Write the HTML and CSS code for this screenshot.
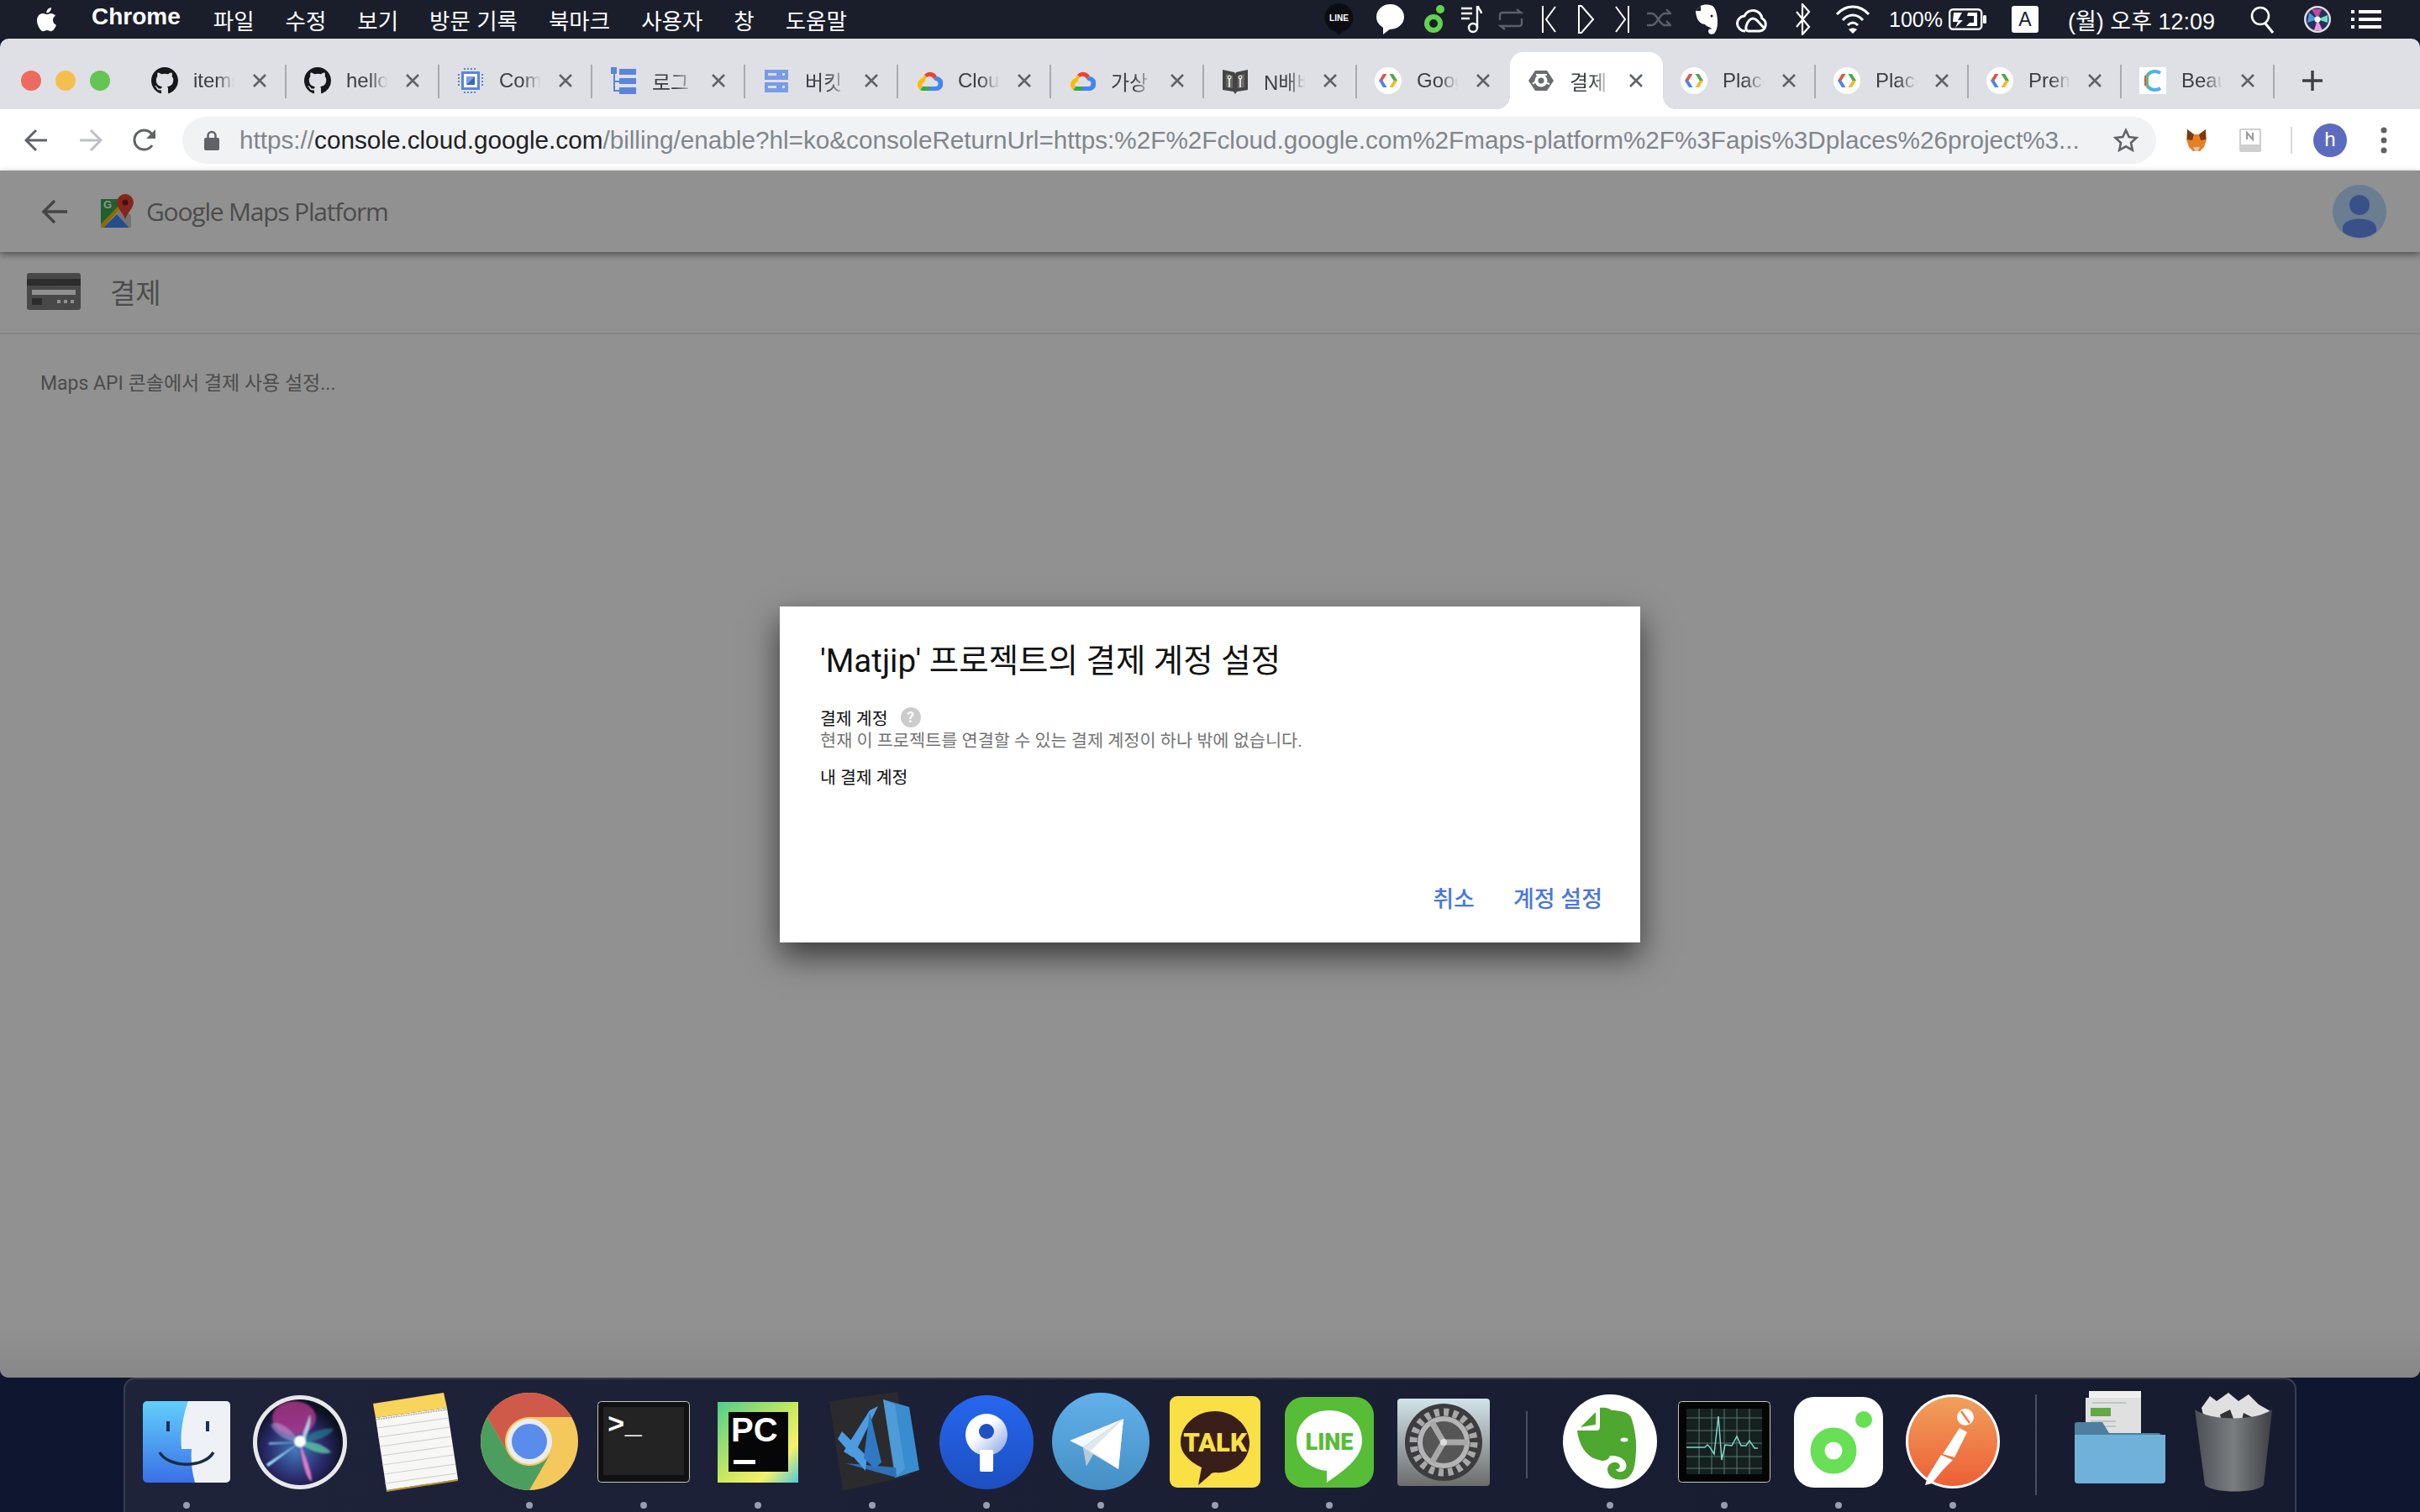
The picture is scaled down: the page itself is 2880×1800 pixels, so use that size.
FILE: index.html
```html
<!DOCTYPE html>
<html lang="ko">
  <head>
    <meta charset="UTF-8" />
    <title>결제</title>
    <link rel="stylesheet" href="styles.css">
  </head>
  <body>
    <!-- shared favicons -->
    <svg class="defs" width="0" height="0">
      <defs>
        <symbol id="fav-github" viewBox="0 0 16 16"><path fill="#17171a" d="M8 0C3.58 0 0 3.58 0 8c0 3.54 2.29 6.53 5.47 7.59.4.07.55-.17.55-.38 0-.19-.01-.82-.01-1.49-2.01.37-2.53-.49-2.69-.94-.09-.23-.48-.94-.82-1.13-.28-.15-.68-.52-.01-.53.63-.01 1.08.58 1.23.82.72 1.21 1.87.87 2.33.66.07-.52.28-.87.51-1.07-1.78-.2-3.64-.89-3.64-3.95 0-.87.31-1.59.82-2.15-.08-.2-.36-1.02.08-2.12 0 0 .67-.21 2.2.82.64-.18 1.32-.27 2-.27.68 0 1.36.09 2 .27 1.53-1.04 2.2-.82 2.2-.82.44 1.1.16 1.92.08 2.12.51.56.82 1.27.82 2.15 0 3.07-1.87 3.75-3.65 3.95.29.25.54.73.54 1.48 0 1.07-.01 1.93-.01 2.2 0 .21.15.46.55.38A8.013 8.013 0 0016 8c0-4.42-3.58-8-8-8z"/></symbol>
        <symbol id="fav-chip" viewBox="0 0 32 32"><path fill="none" stroke="#5b84dc" stroke-width="2" stroke-dasharray="2 2" d="M2 8v16M30 8v16M8 2h16M8 30h16"/><rect x="5" y="5" width="22" height="22" fill="#5b84dc"/><rect x="8" y="8" width="16" height="16" fill="#fff"/><path fill="#7ea0e6" d="M11 11h10v10H11z"/><path fill="#3c66c4" d="M21 11v10H11z"/></symbol>
        <symbol id="fav-log" viewBox="0 0 32 32"><path fill="#5b84dc" d="M1 0h7v8H1zM11 2h20v7H11zM11 13h20v7H11zM11 24h20v8H11z"/><path fill="none" stroke="#5b84dc" stroke-width="2" d="M5 8v20h6M5 17h6"/></symbol>
        <symbol id="fav-bucket" viewBox="0 0 32 32"><path fill="#7a9be4" d="M2 3h28v12H2zM2 18h28v12H2z"/><path fill="#d5e0f8" d="M6 7h10v3H6zM6 22h10v3H6zM23 7h3v3h-3zM23 22h3v3h-3z"/></symbol>
        <symbol id="fav-cloud" viewBox="0 0 32 32"><path fill="#ea4335" d="M10 9a9 9 0 0 1 15 2l-4 3a5 5 0 0 0-8-2z"/><path fill="#4285f4" d="M25 11a8 8 0 0 1-2 17h-7v-5h7a3 3 0 0 0 0-7l-2-2z"/><path fill="#34a853" d="M8 23h8v5H8a7 7 0 0 1-3-1z"/><path fill="#fbbc05" d="M10 9l3 3a5 5 0 0 0-2 4l-1 2a3 3 0 0 0-2 5l-3 4a8 8 0 0 1 3-14z"/></symbol>
        <symbol id="fav-book" viewBox="0 0 32 32"><path fill="#444" d="M1 3l14 3 1 2 1-2 14-3v24l-13 2-2 3-2-3-13-2z"/><path fill="#fff" d="M5 8l8 2v15l-8-1zM27 8l-8 2v15l8-1z" opacity=".2"/><path fill="none" stroke="#fff" stroke-width="1.5" d="M9 13v11M22 13v11"/><circle cx="9" cy="12" r="2" fill="none" stroke="#fff"/><circle cx="22" cy="12" r="2" fill="none" stroke="#fff"/></symbol>
        <symbol id="fav-dev" viewBox="0 0 32 32"><circle cx="16" cy="16" r="16" fill="#fff"/><path fill="#db5a45" d="M10 8h4.500l-5 8H5z"/><path fill="#4285f4" d="M5 16h4.500l5 8H10z"/><path fill="#4ea84f" d="M17.500 8H22l5 8h-4.500z"/><path fill="#f2b92c" d="M27 16h-4.500l-5 8H22z"/></symbol>
        <symbol id="fav-hex" viewBox="0 0 32 32"><path fill="#6a6d70" d="M9 4h14l8 12-8 12H9L1 16z"/><path stroke="#fff" stroke-width="2" d="M10 9h13M26 20l-6-2M6 20l6-5"/><circle cx="16" cy="16" r="7.500" fill="#fff"/><circle cx="16" cy="16" r="3.500" fill="#6a6d70"/></symbol>
        <symbol id="fav-beau" viewBox="0 0 32 32"><path fill="#fff" d="M0 0h32v32H0z"/><path fill="none" stroke="#4fb3e8" stroke-width="4" d="M25 7a11 11 0 1 0 0 18"/><path fill="none" stroke="#e2574c" stroke-width="2" d="M7 10v12"/><path fill="none" stroke="#6cc04a" stroke-width="2" d="M10 7v18"/></symbol>
        <symbol id="tab-x" viewBox="0 0 18 18"><path fill="none" stroke="#5f6368" stroke-width="2.600" d="M2 2l14 14M16 2L2 16"/></symbol>
      </defs>
    </svg>

    <header class="menubar">
      <svg class="apple" width="26" height="32" viewBox="0 0 26 32"><path fill="#fff" d="M21 17c0-3.500 2.800-5 3-5.200-1.700-2.400-4.200-2.700-5.100-2.800-2.100-.2-4.200 1.300-5.300 1.300-1.100 0-2.800-1.300-4.600-1.200C6.600 9.100 4.400 10.400 3.200 12.500.7 16.800 2.600 23.200 5 26.700c1.200 1.700 2.600 3.600 4.500 3.600 1.800-.1 2.500-1.200 4.600-1.200s2.800 1.200 4.600 1.100c1.900 0 3.100-1.700 4.300-3.400 1.400-2 1.900-3.900 2-4-.1 0-3.900-1.500-4-5.800zM17.500 6.600c1-1.200 1.600-2.800 1.500-4.500-1.400.1-3.200 1-4.200 2.200-.9 1-1.700 2.700-1.500 4.300 1.600.1 3.200-.8 4.200-2z"/></svg>
      <nav class="menus">
        <span class="menu-app">Chrome</span>
        <span>파일</span><span>수정</span><span>보기</span><span>방문 기록</span><span>북마크</span><span>사용자</span><span>창</span><span>도움말</span>
      </nav>
      <div class="status">
        <svg class="st-line" width="35" height="38" viewBox="0 0 35 38"><circle cx="17.500" cy="17" r="17" fill="#0c0d12"/><path fill="#0c0d12" d="M12 32h11l-5.500 6z"/><text x="17.500" y="21" class="st-line-text">LINE</text></svg>
        <svg class="st-bubble" width="33" height="36" viewBox="0 0 33 36"><ellipse cx="16.500" cy="15" rx="16.500" ry="15" fill="#fff"/><path fill="#fff" d="M8 26l0 10 9-7z"/></svg>
        <svg class="st-green" width="25" height="34" viewBox="0 0 25 34"><circle cx="19" cy="5" r="5" fill="#63d34f"/><circle cx="11" cy="22" r="8" fill="none" stroke="#63d34f" stroke-width="6"/></svg>
        <svg class="st-music" width="26" height="34" viewBox="0 0 26 34"><path fill="none" stroke="#fff" stroke-width="2.400" d="M1 4h13M1 10h13M1 16h10M21 1c0 4 4 5 4 9M20 1v26"/><circle cx="15" cy="27" r="5" fill="none" stroke="#fff" stroke-width="2.400"/></svg>
        <svg class="st-repeat" width="30" height="26" viewBox="0 0 30 26"><path fill="none" stroke="#5c5f68" stroke-width="2.400" d="M2 14V8a3 3 0 0 1 3-3h22l-5-4M28 12v6a3 3 0 0 1-3 3H3l5 4"/></svg>
        <svg class="st-prev" width="18" height="34" viewBox="0 0 18 34"><path fill="none" stroke="#fff" stroke-width="2" d="M2 1v32M17 2L6 17l11 15"/></svg>
        <svg class="st-play" width="21" height="36" viewBox="0 0 21 36"><path fill="none" stroke="#fff" stroke-width="2" d="M2 2h3l14 16L5 34H2z"/></svg>
        <svg class="st-next" width="18" height="34" viewBox="0 0 18 34"><path fill="none" stroke="#fff" stroke-width="2" d="M16 1v32M1 2l11 15L1 32"/></svg>
        <svg class="st-shuffle" width="29" height="26" viewBox="0 0 29 26"><path fill="none" stroke="#5c5f68" stroke-width="2.400" d="M0 6h6c6 0 9 14 15 14h7l-5-5M0 20h6c6 0 9-14 15-14h7l-5-5"/></svg>
        <svg class="st-evernote" width="27" height="36" viewBox="0 0 27 36"><path fill="#fff" d="M7 2c3-2 10-2 14 0 4 3 6 11 6 20 0 6-2 11-4 13-4 2-7 0-7-3s3-3 4-2c-1-3-6-3-8-6-3 0-9-3-10-10-1-3-1-5-1-6l6-6z"/><path fill="#1a1e2b" d="M7 2v6H1z"/><circle cx="20" cy="14" r="1.500" fill="#1a1e2b"/></svg>
        <svg class="st-cc" width="37" height="34" viewBox="0 0 37 34"><path fill="none" stroke="#fff" stroke-width="3" d="M11 31a9 9 0 0 1-1-18 11 11 0 0 1 21 3 8 8 0 0 1-3 15H15C8 31 14 16 20 16s9 9 14 11"/></svg>
        <svg class="st-bt" width="19" height="38" viewBox="0 0 19 38"><path fill="none" stroke="#fff" stroke-width="2.200" d="M2 10l15 18-8 9V1l8 9L2 28"/></svg>
        <svg class="st-wifi" width="42" height="36" viewBox="0 0 42 36"><path fill="none" stroke="#fff" stroke-width="3" d="M2 12c11-12 27-12 38 0M9 19c7-8 17-8 24 0M15 25c4-4 8-4 12 0"/><path fill="#fff" d="M21 35l-5-5c3-2 7-2 10 0z"/></svg>
        <span class="st-text">100%</span>
        <svg class="st-battery" width="45" height="26" viewBox="0 0 45 26"><rect x="1.200" y="1.200" width="38" height="23.600" rx="4" fill="none" stroke="#fff" stroke-width="2.400"/><rect x="41" y="8" width="4" height="10" rx="1.500" fill="#fff"/><path fill="#fff" d="M6 5h10l-5 9h6L8 23l3-7H5zM23 5h11v16H21l4-4h5V9h-8z"/></svg>
        <span class="st-input">A</span>
        <span class="st-clock">(월) 오후 12:09</span>
        <svg class="st-search" width="28" height="34" viewBox="0 0 28 34"><circle cx="12" cy="13" r="10" fill="none" stroke="#fff" stroke-width="2.600"/><path stroke="#fff" stroke-width="3" d="M18 22l9 11"/></svg>
        <svg class="st-siri" width="32" height="32" viewBox="0 0 32 32"><circle cx="16" cy="16" r="16" fill="#dfe0e6"/><circle cx="16" cy="16" r="13.500" fill="#2a2f5c"/><path fill="#c04aa0" d="M16 16L9 4l12 0z"/><path fill="#4a9ae0" d="M16 16L4 20l2-12z"/><path fill="#e8a0d8" d="M16 16l6 13-10 0z"/><path fill="#6fe0c8" d="M16 16l12-5 0 9z"/><circle cx="16" cy="16" r="3.500" fill="#fff"/></svg>
        <svg class="st-list" width="36" height="22" viewBox="0 0 36 22"><path fill="#fff" d="M0 0h4v4H0zM9 0h27v4H9zM0 9h4v4H0zM9 9h27v4H9zM0 18h4v4H0zM9 18h27v4H9z"/></svg>
      </div>
    </header>

    <div class="window">
      <div class="tabstrip">
        <div class="lights"><i class="light red"></i><i class="light yellow"></i><i class="light green"></i></div>
        <div class="tab"><svg class="fav"><use href="#fav-github"/></svg><span class="tab-label">items</span><svg class="tab-close"><use href="#tab-x"/></svg></div>
        <div class="tab"><svg class="fav"><use href="#fav-github"/></svg><span class="tab-label">hello</span><svg class="tab-close"><use href="#tab-x"/></svg></div>
        <div class="tab"><svg class="fav"><use href="#fav-chip"/></svg><span class="tab-label">Compute</span><svg class="tab-close"><use href="#tab-x"/></svg></div>
        <div class="tab"><svg class="fav"><use href="#fav-log"/></svg><span class="tab-label">로그 뷰어</span><svg class="tab-close"><use href="#tab-x"/></svg></div>
        <div class="tab"><svg class="fav"><use href="#fav-bucket"/></svg><span class="tab-label">버킷 세부</span><svg class="tab-close"><use href="#tab-x"/></svg></div>
        <div class="tab"><svg class="fav"><use href="#fav-cloud"/></svg><span class="tab-label">Cloud</span><svg class="tab-close"><use href="#tab-x"/></svg></div>
        <div class="tab"><svg class="fav"><use href="#fav-cloud"/></svg><span class="tab-label">가상 머신</span><svg class="tab-close"><use href="#tab-x"/></svg></div>
        <div class="tab"><svg class="fav"><use href="#fav-book"/></svg><span class="tab-label">N배배배</span><svg class="tab-close"><use href="#tab-x"/></svg></div>
        <div class="tab no-sep"><svg class="fav"><use href="#fav-dev"/></svg><span class="tab-label">Google</span><svg class="tab-close"><use href="#tab-x"/></svg></div>
        <div class="tab tab-active"><svg class="fav"><use href="#fav-hex"/></svg><span class="tab-label">결제 서비스</span><svg class="tab-close"><use href="#tab-x"/></svg></div>
        <div class="tab"><svg class="fav"><use href="#fav-dev"/></svg><span class="tab-label">Places</span><svg class="tab-close"><use href="#tab-x"/></svg></div>
        <div class="tab"><svg class="fav"><use href="#fav-dev"/></svg><span class="tab-label">Places</span><svg class="tab-close"><use href="#tab-x"/></svg></div>
        <div class="tab"><svg class="fav"><use href="#fav-dev"/></svg><span class="tab-label">Premium</span><svg class="tab-close"><use href="#tab-x"/></svg></div>
        <div class="tab"><svg class="fav"><use href="#fav-beau"/></svg><span class="tab-label">Beautiful</span><svg class="tab-close"><use href="#tab-x"/></svg></div>
        <svg class="new-tab" width="26" height="26" viewBox="0 0 26 26"><path stroke="#3c4043" stroke-width="3.400" d="M13 1v24M1 13h24"/></svg>
      </div>

      <div class="toolbar">
        <svg class="nav-back" width="28" height="28" viewBox="0 0 28 28"><path fill="none" stroke="#5f6368" stroke-width="3" d="M27 14H3M14 2L2 14l12 12"/></svg>
        <svg class="nav-forward" width="28" height="28" viewBox="0 0 28 28"><path fill="none" stroke="#bdc1c6" stroke-width="3" d="M1 14h24M14 2l12 12-12 12"/></svg>
        <svg class="nav-reload" width="28" height="28" viewBox="0 0 28 28"><path fill="none" stroke="#5f6368" stroke-width="3" d="M23 20a11.500 11.500 0 1 1 1-11"/><path fill="#5f6368" d="M27 1v11H16z"/></svg>
        <div class="omnibox">
          <svg class="lock" width="18" height="24" viewBox="0 0 18 24"><path fill="none" stroke="#5f6368" stroke-width="2.500" d="M4.500 10V6.500a4.500 4.500 0 0 1 9 0V10"/><rect y="9" width="18" height="15" rx="2" fill="#5f6368"/></svg>
          <span class="url"><span class="url-dim">https://</span><span class="url-host">console.cloud.google.com</span><span class="url-dim">/billing/enable?hl=ko&amp;consoleReturnUrl=https:%2F%2Fcloud.google.com%2Fmaps-platform%2F%3Fapis%3Dplaces%26project%3...</span></span>
          <svg class="star" width="30" height="30" viewBox="0 0 30 30"><path fill="none" stroke="#5f6368" stroke-width="2.600" d="M15 3l3.700 8 8.800 1-6.500 6 1.800 8.700L15 22.300l-7.800 4.400L9 18l-6.500-6 8.800-1z"/></svg>
        </div>
        <svg class="ext-fox" width="28" height="28" viewBox="0 0 28 28"><path fill="#e87f24" d="M3 1l8 6h6l8-6 1 12-3 9-5 5h-8l-5-5-3-9z"/><path fill="#763d16" d="M3 1l8 6-2 7-6-1zM25 1l-8 6 2 7 6-1z"/><path fill="#d7c1b3" d="M10 22h8l-2 5h-4z"/></svg>
        <svg class="ext-note" width="26" height="28" viewBox="0 0 26 28"><rect x="1" y="1" width="24" height="26" rx="1" fill="none" stroke="#cfcfcf" stroke-width="2"/><rect x="1" y="19" width="24" height="8" fill="#cfcfcf"/><path stroke="#9a9a9a" stroke-width="2" fill="none" d="M9 13V5l7 8V5"/></svg>
        <span class="tool-sep"></span>
        <span class="profile">h</span>
        <svg class="kebab" width="8" height="32" viewBox="0 0 8 32"><circle cx="4" cy="4" r="3.500" fill="#5f6368"/><circle cx="4" cy="16" r="3.500" fill="#5f6368"/><circle cx="4" cy="28" r="3.500" fill="#5f6368"/></svg>
      </div>

      <main class="page">
        <div class="app-header">
          <svg class="app-back" width="32" height="32" viewBox="0 0 32 32"><path fill="none" stroke="#777" stroke-width="3.400" d="M31 16H3M16 3L3 16l13 13"/></svg>
          <svg class="maps-logo" width="40" height="42" viewBox="0 0 40 42"><path fill="#34a853" d="M0 6h30v6L0 36z"/><path fill="#4285f4" d="M3 40l16-16 15 16z"/><path fill="#fbbc05" d="M0 36L21 14l3 3L3 40H0z"/><path fill="#ccc" d="M24 17l12 8v15h-2L19 24z"/><path fill="#ea4335" d="M29 0a10 10 0 0 1 10 10c0 6-7 12-10 20-3-8-10-14-10-20A10 10 0 0 1 29 0z"/><circle cx="29" cy="10" r="3.500" fill="#7a1c14"/><text x="3" y="17" class="maps-g">G</text></svg>
          <span class="brand">Google Maps Platform</span>
          <svg class="avatar" width="64" height="64" viewBox="0 0 64 64"><circle cx="32" cy="32" r="32" fill="#badbff"/><circle cx="32" cy="24" r="12" fill="#668cef"/><path fill="#668cef" d="M12 52c0-8 10-11.500 20-11.500S52 44 52 52v4a32 32 0 0 1-40 0z"/></svg>
        </div>
        <div class="billing-bar">
          <svg class="card-icon" width="64" height="44" viewBox="0 0 64 44"><rect width="64" height="44" rx="3" fill="#7f7f7f"/><rect y="7" width="64" height="8" fill="#4e4e4e"/><rect x="6" y="20" width="52" height="6" fill="#fff"/><rect x="6" y="30" width="12" height="8" fill="#4e4e4e"/><path fill="#fff" d="M36 32h4v4h-4zM44 32h4v4h-4zM52 32h4v4h-4z"/></svg>
          <h1 class="billing-title">결제</h1>
        </div>
        <p class="loading">Maps API 콘솔에서 결제 사용 설정...</p>
        <div class="scrim">
          <section class="dialog">
            <h2 class="dialog-title">'Matjip' 프로젝트의 결제 계정 설정</h2>
            <div class="field-label">결제 계정 <span class="help">?</span></div>
            <p class="field-desc">현재 이 프로젝트를 연결할 수 있는 결제 계정이 하나 밖에 없습니다.</p>
            <div class="field-label field-mine">내 결제 계정</div>
            <div class="dialog-actions">
              <span class="dialog-btn">취소</span>
              <span class="dialog-btn">계정 설정</span>
            </div>
          </section>
        </div>
      </main>
    </div>

    <footer class="dock">
      <!-- finder -->
      <div class="app on"><svg viewBox="0 0 120 120"><defs><linearGradient id="fa" x1="0" y1="0" x2="0" y2="1"><stop offset="0" stop-color="#62cffb"/><stop offset="1" stop-color="#3a70e8"/></linearGradient></defs><rect x="8" y="12" width="104" height="97" rx="5" fill="url(#fa)"/><path fill="#eef2f7" d="M62 12h45a5 5 0 0 1 5 5v87a5 5 0 0 1-5 5H70c-4-14-5-29-4-40H54c-2-19 2-41 8-57z"/><path fill="#1c2f55" d="M36 36h4v12h-4zM83 36h4v12h-4z"/><path fill="none" stroke="#1d2c44" stroke-width="3.500" d="M28 73c10 18 52 20 64 0"/></svg><i></i></div>
      <!-- siri -->
      <div class="app"><svg viewBox="0 0 120 120"><defs><radialGradient id="si" cx=".45" cy=".6" r=".55"><stop offset="0" stop-color="#3f78b8"/><stop offset=".6" stop-color="#2b2a6c"/><stop offset="1" stop-color="#0d1220"/></radialGradient><filter id="soft"><feGaussianBlur stdDeviation="1.200"/></filter><clipPath id="sic"><circle cx="59" cy="61" r="51"/></clipPath></defs><circle cx="59" cy="61" r="56" fill="#e8e8ea"/><circle cx="59" cy="61" r="51" fill="url(#si)"/><g clip-path="url(#sic)" filter="url(#soft)"><ellipse cx="52" cy="32" rx="26" ry="20" fill="#b03a8e" opacity=".8"/><path fill="#2a8a9a" d="M59 61c10-10 25-18 40-16-5 10-25 16-40 16z" opacity=".6"/><path fill="#c9b8e8" d="M59 61C45 40 30 35 24 40c6 14 22 20 35 21z" opacity=".45"/><path fill="#5fd0a8" d="M59 61c14-2 28 2 37 12-10 4-28-2-37-12z" opacity=".75"/><path fill="#e07ac8" d="M59 61c6 16 14 34 14 46-6 0-13-28-14-46z"/><path fill="#a8f6ff" d="M59 61L19 87l2 3z"/><path fill="#c4ecff" d="M59 61l12-33c2 12-4 26-8 33z" opacity=".8"/><path fill="#8fe8ff" d="M59 61H22v3z" opacity=".7"/></g><circle cx="59" cy="60" r="7" fill="#fff" filter="url(#soft)"/></svg></div>
      <!-- notes -->
      <div class="app"><svg viewBox="0 0 120 120"><path fill="#b9932b" d="M26 118l85-13v2l-85 13z"/><path fill="#f7f7f5" d="M13 32l85-12 13 85-85 13z"/><path fill="#f8d45c" d="M10 15L94 2l4 18-85 12z"/><path stroke="#d0d0d0" stroke-width="1.200" fill="none" d="M15 44l85-12M16 55l85-12M18 66l85-12M20 77l85-12M21 88l85-12M23 99l85-12M24 110l85-12"/><path stroke="#aaa" stroke-width="1.500" stroke-dasharray="2 1" d="M13 34l85-12"/></svg></div>
      <!-- chrome -->
      <div class="app on"><svg viewBox="0 0 120 120"><circle cx="60" cy="60" r="58" fill="#f5c85c"/><path fill="#cf5a4a" d="M9.800 31A58 58 0 0 1 110.200 31H60A29 29 0 0 0 34.900 74.500z"/><path fill="#4c9e5f" d="M9.800 31A58 58 0 0 0 60 118L85.100 74.500A29 29 0 0 1 34.900 74.500z"/><circle cx="60" cy="60" r="27" fill="#e9edf2"/><circle cx="60" cy="60" r="21" fill="#5a8cec"/></svg><i></i></div>
      <!-- terminal -->
      <div class="app on"><svg viewBox="0 0 120 120"><rect x="5.500" y="12.500" width="109" height="96" rx="4" fill="#111" stroke="#c4c4c4"/><rect x="12" y="19" width="96" height="81" fill="#232323"/><text x="17" y="50" class="term-text">&gt;_</text></svg><i></i></div>
      <!-- pycharm -->
      <div class="app on"><svg viewBox="0 0 120 120"><defs><linearGradient id="pc" x1="0" y1="0" x2="1" y2="1"><stop offset="0" stop-color="#4fcf8a"/><stop offset=".5" stop-color="#c8e860"/><stop offset=".75" stop-color="#f5f26a"/><stop offset="1" stop-color="#53c8de"/></linearGradient></defs><rect x="12" y="13" width="96" height="96" fill="url(#pc)"/><rect x="25" y="25" width="71" height="71" fill="#060606"/><text x="28" y="60" class="pc-text">PC</text><rect x="31" y="82" width="26" height="5" fill="#fff"/></svg><i></i></div>
      <!-- vs code -->
      <div class="app on"><svg viewBox="0 0 120 120"><path fill="#2b2b2d" d="M9 12L90 1l14 100-79 18z"/><path fill="#3a8cd0" d="M73 10l31 9 12 75-28 9-2-12z"/><path fill="#5aa5e0" d="M73 10l14 6 12 76-12 12-14-94z" opacity=".6"/><path fill="#3070b8" d="M28 86l60 5 1 12z"/><path fill="#4d9be0" d="M24 48l-5 9 33 38 2-17zM67 18l-10 5-31 49 11 7z"/><path fill="#2f79c4" d="M57 25l14 60-8 7-13-12z"/></svg><i></i></div>
      <!-- sourcetree -->
      <div class="app on"><svg viewBox="0 0 120 120"><defs><linearGradient id="st" x1="0" y1="0" x2="0" y2="1"><stop offset="0" stop-color="#2567ef"/><stop offset="1" stop-color="#1d4fc0"/></linearGradient><linearGradient id="stk" x1="0" y1="0" x2="1" y2="1"><stop offset=".4" stop-color="#fff"/><stop offset="1" stop-color="#7f9ce0"/></linearGradient></defs><circle cx="60" cy="61" r="56" fill="url(#st)"/><circle cx="60" cy="52" r="25" fill="url(#stk)"/><circle cx="60" cy="48" r="9" fill="#1f50c4"/><rect x="52" y="70" width="16" height="26" rx="2" fill="#fff"/></svg><i></i></div>
      <!-- telegram -->
      <div class="app on"><svg viewBox="0 0 120 120"><defs><linearGradient id="tg" x1="0" y1="0" x2="0" y2="1"><stop offset="0" stop-color="#62b0ea"/><stop offset="1" stop-color="#458fc4"/></linearGradient></defs><circle cx="60" cy="60" r="58" fill="url(#tg)"/><path fill="#f5f8fb" d="M87 33L23 59l16 8z"/><path fill="#dfe7ef" d="M87 33L39 67l4 22 8-14 30 18z"/><path fill="#fff" d="M87 33L48 71l33 22z"/><path fill="#b9c9d8" d="M39 67l4 22 8-14z"/></svg><i></i></div>
      <!-- kakaotalk -->
      <div class="app on"><svg viewBox="0 0 120 120"><rect x="6" y="6" width="108" height="109" rx="9" fill="#f8e045"/><path fill="#3a1e1a" d="M60 24c22 0 41 17 41 38 0 20-18 37-41 35-3 0-5 1-6 3l-14 12 4-21C28 83 19 73 19 61c0-21 19-37 41-37z"/><text x="60" y="72" class="talk-text">TALK</text></svg><i></i></div>
      <!-- line -->
      <div class="app on"><svg viewBox="0 0 120 120"><rect x="7" y="7" width="106" height="108" rx="22" fill="#57bc36"/><path fill="#fff" d="M60 23c23 0 39 15 39 36 0 22-24 37-42 50v-14c-20-2-36-16-36-36 0-21 16-36 39-36z"/><text x="60" y="70" class="line-text">LINE</text></svg><i></i></div>
      <!-- system preferences -->
      <div class="app"><svg viewBox="0 0 120 120"><defs><linearGradient id="pr" x1="0" y1="0" x2="0" y2="1"><stop offset="0" stop-color="#d2e4ea"/><stop offset="1" stop-color="#6c6c6c"/></linearGradient></defs><rect x="5" y="9" width="110" height="104" rx="4" fill="url(#pr)"/><circle cx="60" cy="61" r="46" fill="#3c3c3e"/><circle cx="60" cy="61" r="36" fill="none" stroke="#a8a8a8" stroke-width="9" stroke-dasharray="6 5.300"/><circle cx="60" cy="61" r="28" fill="#565656" stroke="#b5b5b5" stroke-width="6"/><path stroke="#a8a8a8" stroke-width="7" fill="none" d="M60 61L46 37M60 61h29M60 61L46 85"/><circle cx="60" cy="61" r="4" fill="#ddd"/></svg></div>
      <div class="dock-sep short"></div>
      <!-- evernote -->
      <div class="app on"><svg viewBox="0 0 120 120"><circle cx="60" cy="60" r="56" fill="#fff"/><path fill="#4ea72f" d="M48 20c6-1 12 1 14 3 10 0 20 2 23 8 4 11 7 27 6 41-1 16-2 26-11 32-10 4-22 0-23-10 0-8 9-12 14-7 2 3 0 7-4 6 1 4 9 5 12-1 3-9-7-16-19-15-2 6-8 7-13 5-11-2-23-12-26-35h23c3 0 4-2 4-5zM25 43l18-18v15z"/><ellipse cx="77" cy="58" rx="4.500" ry="2.500" fill="#fff"/></svg><i></i></div>
      <!-- activity monitor -->
      <div class="app on"><svg viewBox="0 0 120 120"><rect x="5.500" y="12.500" width="109" height="96" rx="4" fill="#050505" stroke="#c4c4c4"/><rect x="15" y="21" width="90" height="78" fill="#15211f"/><path stroke="#5d7672" stroke-width="1" fill="none" d="M15 32h90M15 47h90M15 62h90M15 78h90M15 92h90M30 21v78M45 21v78M60 21v78M75 21v78M90 21v78"/><path stroke="#7fd8c8" stroke-width="1.500" fill="none" d="M15 67h22l3-3 3 3 5 8 5-45 4 52 4-18 8 1 6-11 5 11h6l4-6 6 9h4"/></svg><i></i></div>
      <!-- whatap -->
      <div class="app on"><svg viewBox="0 0 120 120"><rect x="7" y="7" width="106" height="108" rx="24" fill="#fff"/><circle cx="90" cy="34" r="10" fill="#67e055"/><circle cx="54" cy="71" r="19" fill="none" stroke="#67e055" stroke-width="17"/></svg><i></i></div>
      <!-- postman -->
      <div class="app on"><svg viewBox="0 0 120 120"><defs><linearGradient id="pm" x1="0" y1="0" x2="0" y2="1"><stop offset="0" stop-color="#f1a05c"/><stop offset="1" stop-color="#ed5f36"/></linearGradient></defs><circle cx="60" cy="60" r="56" fill="#fff"/><circle cx="60" cy="60" r="53" fill="url(#pm)"/><circle cx="75" cy="31" r="10" fill="#fff"/><path stroke="#ef7d48" stroke-width="2.500" d="M70 24l10 14"/><path fill="#fff" d="M68 44l9 5-15 30-14-4zM46 76l14 6-11 11-14 17-8 2 3-10z"/></svg><i></i></div>
      <div class="dock-sep tall"></div>
      <!-- downloads -->
      <div class="app"><svg viewBox="0 0 120 120"><path fill="#f0f0f0" d="M24 0h62v50H24z"/><path fill="#e0e0e0" d="M20 8h66v42H20z"/><path fill="#62a845" d="M26 20h24v10H26z"/><path stroke="#9aa" d="M28 14h40M26 36h30M26 42h30"/><path fill="#4f7f9e" d="M7 40a3 3 0 0 1 3-3h30l8 13h58a4 4 0 0 1 4 4v30H7z"/><path fill="#6fb1d8" d="M7 52h108v54a4 4 0 0 1-4 4H11a4 4 0 0 1-4-4z"/></svg></div>
      <!-- trash -->
      <div class="app"><svg viewBox="0 0 120 120"><defs><linearGradient id="tr" x1="0" y1="0" x2="1" y2="0"><stop offset="0" stop-color="#4c4f54"/><stop offset=".5" stop-color="#7a7d80"/><stop offset="1" stop-color="#3e4044"/></linearGradient></defs><path fill="#e0e0e0" d="M22 20l10-14 8 6 14-10 12 10 12-8 12 12 14 8-8 22H28z"/><path fill="#333" d="M44 28l12-6 6 16-14 6zM72 26l12 6-4 14-12-4z"/><path fill="url(#tr)" d="M14 22c20 14 72 14 92 0l-10 90c-8 10-60 10-70 0z"/></svg></div>
    </footer>
  </body>
</html>
```

FILE: styles.css
```css
* {
  box-sizing: border-box;
}
body {
  margin: 0;
  width: 2880px;
  height: 1800px;
  overflow: hidden;
  display: flex;
  flex-direction: column;
  background-color: #0e1630;
  font-family: "Liberation Sans", "Noto Sans CJK KR", sans-serif;
}
.defs {
  position: absolute;
}

/* menu bar */
.menubar {
  height: 46px;
  flex: none;
  display: flex;
  align-items: center;
  padding-left: 42px;
  background-color: #1a1e2b;
  color: #fff;
  font-size: 26.5px;
}
.menus {
  display: flex;
  gap: 37px;
  margin-left: 41px;
}
.menu-app {
  font-weight: bold;
  font-size: 28px;
  margin-right: 2px;
}
.status {
  margin-left: auto;
  display: flex;
  align-items: center;
}
.status svg {
  flex: none;
}
.st-line { margin-right: 27px; }
.st-bubble { margin-right: 24px; }
.st-green { margin-right: 18px; }
.st-music { margin-right: 19px; }
.st-repeat { margin-right: 21px; }
.st-prev { margin-right: 25px; }
.st-play { margin-right: 24px; }
.st-next { margin-right: 20px; }
.st-shuffle { margin-right: 28px; }
.st-evernote { margin-right: 22px; }
.st-cc { margin-right: 33px; }
.st-bt { margin-right: 29px; }
.st-wifi { margin-right: 22px; }
.st-battery { margin-right: 30px; margin-left: 10px; }
.st-search { margin-right: 36px; }
.st-siri { margin-right: 24px; }
.st-list { margin-right: 46px; }
.st-line-text {
  font-size: 10px;
  font-weight: bold;
  fill: #fff;
  text-anchor: middle;
}
.st-text {
  width: 61px;
  font-size: 25px;
  white-space: nowrap;
}
.st-input {
  width: 32px;
  height: 32px;
  border-radius: 3px;
  margin-right: 35px;
  background-color: #fff;
  color: #1a1e2b;
  font-size: 23px;
  line-height: 32px;
  text-align: center;
}
.st-clock {
  width: 176px;
  margin-right: 41px;
  font-size: 27px;
  white-space: nowrap;
}

/* browser window */
.window {
  height: 1594px;
  flex: none;
  display: flex;
  flex-direction: column;
  border-radius: 10px;
  overflow: hidden;
}
.tabstrip {
  height: 84px;
  flex: none;
  display: flex;
  align-items: flex-end;
  background-color: #dfe0e5;
}
.lights {
  width: 159px;
  height: 68px;
  flex: none;
  display: flex;
  align-items: center;
  gap: 17px;
  padding-left: 25px;
}
.light {
  width: 24px;
  height: 24px;
  border-radius: 50%;
}
.red { background-color: #ed6a5e; }
.yellow { background-color: #f5bf4f; }
.green { background-color: #62c554; }
.tab {
  width: 182px;
  height: 68px;
  flex: none;
  position: relative;
  display: flex;
  align-items: center;
  padding-left: 21px;
  color: #3c4043;
  font-size: 24px;
}
.tab::after {
  content: "";
  position: absolute;
  right: 0;
  top: 15px;
  width: 2px;
  height: 40px;
  background-color: #a9aaae;
}
.no-sep::after {
  display: none;
}
.tab-active {
  background-color: #fff;
  border-radius: 16px 16px 0 0;
}
.tab-active::before,
.tab-active::after {
  content: "";
  position: absolute;
  top: auto;
  bottom: 0;
  width: 16px;
  height: 16px;
}
.tab-active::before {
  left: -16px;
  background: radial-gradient(circle at 0 0, transparent 16px, #fff 16px);
}
.tab-active::after {
  right: -16px;
  background: radial-gradient(circle at 100% 0, transparent 16px, #fff 16px);
}
.fav {
  width: 32px;
  height: 32px;
  flex: none;
}
.tab-label {
  width: 55px;
  margin-left: 18px;
  overflow: hidden;
  white-space: nowrap;
  -webkit-mask-image: linear-gradient(to right, #000 50%, transparent 90%);
  mask-image: linear-gradient(to right, #000 50%, transparent 90%);
}
.tab-close {
  width: 18px;
  height: 18px;
  flex: none;
  margin-left: 15px;
}
.new-tab {
  margin: 0 0 21px 32px;
}
.toolbar {
  height: 73px;
  flex: none;
  display: flex;
  align-items: center;
  background-color: #fff;
}
.nav-back { margin-left: 29px; }
.nav-forward { margin-left: 37px; }
.nav-reload { margin-left: 36px; }
.omnibox {
  width: 2349px;
  height: 56px;
  margin-left: 31px;
  display: flex;
  align-items: center;
  padding-left: 26px;
  border-radius: 28px;
  background-color: #f1f2f4;
}
.lock {
  flex: none;
}
.url {
  width: 2200px;
  margin-left: 24px;
  flex: none;
  white-space: nowrap;
  font-size: 29.7px;
}
.url-dim { color: #80868b; }
.url-host { color: #202124; }
.star {
  flex: none;
  margin-left: 30px;
}
.ext-fox { margin-left: 34px; }
.ext-note { margin-left: 37px; }
.tool-sep {
  width: 2px;
  height: 32px;
  margin-left: 35px;
  background-color: #d8d8d8;
}
.profile {
  width: 40px;
  height: 40px;
  margin-left: 25px;
  border-radius: 50%;
  background-color: #5c6bc0;
  color: #fff;
  font-size: 24px;
  line-height: 38px;
  text-align: center;
}
.kebab {
  margin-left: 40px;
}

/* page behind the dialog */
.page {
  flex: 1;
  position: relative;
  background-color: #fff;
}
.app-header {
  height: 97px;
  display: flex;
  align-items: center;
  padding: 0 40px 0 49px;
  box-shadow: 0 3px 8px rgba(0, 0, 0, 0.45);
}
.app-back {
  flex: none;
}
.maps-logo {
  margin-left: 39px;
}
.brand {
  margin-left: 14px;
  font-family: "Open Sans", sans-serif;
  font-size: 30px;
  letter-spacing: -1.2px;
  color: #858585;
  white-space: nowrap;
}
.maps-g {
  font-size: 13px;
  font-weight: bold;
  fill: #fff;
}
.avatar {
  margin-left: auto;
}
.billing-bar {
  height: 98px;
  display: flex;
  align-items: center;
  padding: 0 0 2px 32px;
  border-bottom: 2px solid #eaeaea;
}
.billing-title {
  margin: 0 0 0 35px;
  font-size: 33px;
  font-weight: normal;
  color: #858585;
}
.loading {
  margin: 39px 0 0 48px;
  font-family: "Roboto", "Noto Sans CJK KR", sans-serif;
  font-size: 23px;
  color: #858585;
}
.scrim {
  position: absolute;
  inset: 0;
  display: flex;
  align-items: center;
  justify-content: center;
  background: linear-gradient(to bottom, rgba(0, 0, 0, 0.43) 96%, rgba(0, 0, 0, 0.47));
}
.dialog {
  width: 1024px;
  height: 400px;
  display: flex;
  flex-direction: column;
  padding: 42px 24px 0 48px;
  background-color: #fff;
  box-shadow: 0 16px 36px rgba(0, 0, 0, 0.6);
  font-family: "Roboto", "Noto Sans CJK KR", sans-serif;
}
.dialog-title {
  margin: 0;
  font-size: 38.500px;
  line-height: 46px;
  font-weight: normal;
  color: #111;
}
.field-label {
  display: flex;
  align-items: center;
  gap: 15px;
  margin-top: 31px;
  height: 26px;
  font-size: 20.500px;
  color: #111;
}
.help {
  width: 24px;
  height: 24px;
  border-radius: 50%;
  background-color: #ccc;
  color: #fff;
  font-size: 18px;
  font-weight: bold;
  line-height: 24px;
  text-align: center;
}
.field-desc {
  margin: 2px 0 0;
  font-size: 20.800px;
  line-height: 26px;
  color: #757575;
}
.field-mine {
  margin-top: 16px;
}
.dialog-actions {
  margin-top: auto;
  height: 105px;
  display: flex;
  justify-content: flex-end;
  gap: 46px;
  padding: 38px 21px 0 0;
}
.dialog-btn {
  font-size: 27px;
  font-weight: 500;
  line-height: 32px;
  color: #4a77dd;
  white-space: nowrap;
}

/* dock */
.dock {
  width: 2586px;
  height: 160px;
  flex: none;
  margin-left: 147px;
  display: flex;
  padding-left: 5px;
  border: 2px solid #393d50;
  border-bottom: none;
  border-radius: 14px 14px 0 0;
  background: linear-gradient(to right, #1f2339, #171b30);
}
.app {
  width: 136px;
  flex: none;
  display: flex;
  flex-direction: column;
  align-items: center;
  padding-top: 14px;
}
.app svg {
  width: 120px;
  height: 120px;
  flex: none;
}
.app i {
  width: 8px;
  height: 8px;
  margin-top: 12px;
  border-radius: 50%;
  background-color: #9a9db0;
}
.dock-sep {
  width: 62px;
  flex: none;
  position: relative;
}
.dock-sep::after {
  content: "";
  position: absolute;
  left: 30px;
  width: 2px;
  background-color: #4a4e62;
}
.short::after {
  top: 38px;
  height: 80px;
}
.tall::after {
  top: 18px;
  height: 120px;
}
.term-text {
  font-family: "Liberation Mono", monospace;
  font-size: 34px;
  font-weight: bold;
  fill: #fff;
}
.pc-text {
  font-family: "Liberation Sans", sans-serif;
  font-size: 40px;
  font-weight: bold;
  fill: #fff;
}
.talk-text {
  font-family: "Roboto", sans-serif;
  font-size: 31px;
  font-weight: 900;
  fill: #f8e045;
  text-anchor: middle;
}
.line-text {
  font-family: "Roboto", sans-serif;
  font-size: 27px;
  font-weight: 900;
  fill: #57bc36;
  text-anchor: middle;
}
```
